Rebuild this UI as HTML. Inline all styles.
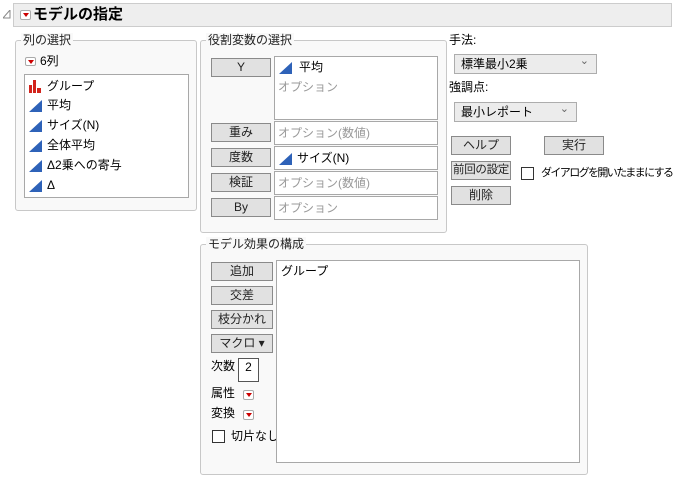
<!DOCTYPE html>
<html><head><meta charset="utf-8"><style>
*{box-sizing:border-box;margin:0;padding:0}
body{width:674px;height:478px;background:#fff;font-family:"Liberation Sans","Noto Sans CJK JP",sans-serif;font-size:12px;color:#000;position:relative;overflow:hidden}
.a{position:absolute;white-space:nowrap}
.grp{position:absolute;border:1px solid #c8c8c8;border-radius:3px;background:#f9f9f9}
.lbl{position:absolute;background:#f9f9f9;padding:0 2px;font-size:12px;line-height:14px;top:-8px;left:5px;color:#222}
.btn{position:absolute;background:#e1e1e1;border:1px solid #8a8a8a;text-align:center;font-size:12px;line-height:16px;color:#222;white-space:nowrap;overflow:hidden}
.box{position:absolute;background:#fff;border:1px solid #a8a8a8}
.ph{color:#999}
.dd{position:absolute;width:11px;height:9px;border:1px solid #aaa;border-radius:2px;background:#fff}
.dd:after{content:"";position:absolute;left:2px;top:2px;border-left:3px solid transparent;border-right:3px solid transparent;border-top:4px solid #c00}
.sel{position:absolute;background:#ececec;border:1px solid #adadad;font-size:12px;line-height:18px;padding-left:6px}
.sel:after{content:"⌄";position:absolute;right:7px;top:-3px;font-size:11px;color:#666}
.cb{position:absolute;width:13px;height:13px;border:1px solid #333;background:#fff}
.it{position:absolute;left:5px;line-height:14px;white-space:nowrap}
</style></head><body>
<svg class="a" style="left:3px;top:10px" width="8" height="9"><path d="M7 0 L7 8 L0 8 Z" fill="none" stroke="#888"/></svg>
<div class="a" style="left:13px;top:3px;width:659px;height:24px;background:#eee;border:1px solid #ccc"></div>
<div class="dd" style="left:20px;top:10px;height:10px"></div>
<div class="a" style="left:33px;top:6px;font-size:15px;font-weight:bold;line-height:18px">モデルの指定</div>

<div class="grp" style="left:15px;top:40px;width:182px;height:171px"><div class="lbl">列の選択</div></div>
<div class="dd" style="left:25px;top:57px"></div>
<div class="a" style="left:40px;top:54px;line-height:14px">6列</div>
<div class="box" style="left:24px;top:74px;width:165px;height:124px">
<svg class="a" style="left:4px;top:5px" width="13" height="13"><rect x="0" y="5" width="3" height="8" fill="#d2231c"/><rect x="4" y="0" width="3" height="13" fill="#d2231c"/><rect x="8" y="8" width="4" height="5" fill="#d2231c"/></svg>
<div class="it" style="top:4px;left:22px">グループ</div>
<svg class="a" style="left:4px;top:25px" width="13" height="12"><path d="M13 0V12H0Z" fill="#2e62b8"/></svg><div class="it" style="top:23px;left:22px">平均</div>
<svg class="a" style="left:4px;top:45px" width="13" height="12"><path d="M13 0V12H0Z" fill="#2e62b8"/></svg><div class="it" style="top:43px;left:22px">サイズ(N)</div>
<svg class="a" style="left:4px;top:65px" width="13" height="12"><path d="M13 0V12H0Z" fill="#2e62b8"/></svg><div class="it" style="top:63px;left:22px">全体平均</div>
<svg class="a" style="left:4px;top:85px" width="13" height="12"><path d="M13 0V12H0Z" fill="#2e62b8"/></svg><div class="it" style="top:83px;left:22px">Δ2乗への寄与</div>
<svg class="a" style="left:4px;top:105px" width="13" height="12"><path d="M13 0V12H0Z" fill="#2e62b8"/></svg><div class="it" style="top:103px;left:22px">Δ</div>
</div>

<div class="grp" style="left:200px;top:40px;width:247px;height:193px"><div class="lbl">役割変数の選択</div></div>
<div class="btn" style="left:211px;top:58px;width:60px;height:19px">Y</div>
<div class="btn" style="left:211px;top:123px;width:60px;height:19px">重み</div>
<div class="btn" style="left:211px;top:148px;width:60px;height:19px">度数</div>
<div class="btn" style="left:211px;top:173px;width:60px;height:19px">検証</div>
<div class="btn" style="left:211px;top:198px;width:60px;height:19px">By</div>
<div class="box" style="left:274px;top:56px;width:164px;height:64px">
<svg class="a" style="left:4px;top:5px" width="13" height="12"><path d="M13 0V12H0Z" fill="#2e62b8"/></svg><div class="it" style="top:3px;left:24px">平均</div>
<div class="it ph" style="top:23px;left:3px">オプション</div></div>
<div class="box" style="left:274px;top:121px;width:164px;height:24px"><div class="it ph" style="top:4px;left:3px">オプション(数値)</div></div>
<div class="box" style="left:274px;top:146px;width:164px;height:24px"><svg class="a" style="left:4px;top:6px" width="13" height="12"><path d="M13 0V12H0Z" fill="#2e62b8"/></svg><div class="it" style="top:4px;left:22px">サイズ(N)</div></div>
<div class="box" style="left:274px;top:171px;width:164px;height:24px"><div class="it ph" style="top:4px;left:3px">オプション(数値)</div></div>
<div class="box" style="left:274px;top:196px;width:164px;height:24px"><div class="it ph" style="top:4px;left:3px">オプション</div></div>

<div class="a" style="left:449px;top:33px;line-height:14px">手法:</div>
<div class="sel" style="left:454px;top:54px;width:143px;height:20px">標準最小2乗</div>
<div class="a" style="left:449px;top:80px;line-height:14px">強調点:</div>
<div class="sel" style="left:454px;top:102px;width:123px;height:20px">最小レポート</div>
<div class="btn" style="left:451px;top:136px;width:60px;height:19px">ヘルプ</div>
<div class="btn" style="left:544px;top:136px;width:60px;height:19px">実行</div>
<div class="btn" style="left:451px;top:161px;width:60px;height:19px;font-size:11.5px;letter-spacing:-0.3px">前回の設定</div>
<div class="cb" style="left:521px;top:167px"></div>
<div class="a" style="left:541px;top:166px;line-height:14px;font-size:11px;letter-spacing:-1.6px">ダイアログを開いたままにする</div>
<div class="btn" style="left:451px;top:186px;width:60px;height:19px">削除</div>

<div class="grp" style="left:200px;top:244px;width:388px;height:231px"><div class="lbl">モデル効果の構成</div></div>
<div class="btn" style="left:211px;top:262px;width:62px;height:19px">追加</div>
<div class="btn" style="left:211px;top:286px;width:62px;height:19px">交差</div>
<div class="btn" style="left:211px;top:310px;width:62px;height:19px">枝分かれ</div>
<div class="btn" style="left:211px;top:334px;width:62px;height:19px">マクロ ▾</div>
<div class="a" style="left:211px;top:359px;line-height:14px">次数</div>
<div class="box" style="left:238px;top:358px;width:21px;height:24px;border-color:#555;text-align:center;line-height:14px;padding-top:1px">2</div>
<div class="a" style="left:211px;top:386px;line-height:14px">属性</div>
<div class="dd" style="left:243px;top:390px;height:10px"></div>
<div class="a" style="left:211px;top:406px;line-height:14px">変換</div>
<div class="dd" style="left:243px;top:410px;height:10px"></div>
<div class="cb" style="left:212px;top:430px"></div>
<div class="a" style="left:231px;top:429px;line-height:14px">切片なし</div>
<div class="box" style="left:276px;top:260px;width:304px;height:203px"><div class="it" style="top:3px;left:4px">グループ</div></div>
</body></html>
